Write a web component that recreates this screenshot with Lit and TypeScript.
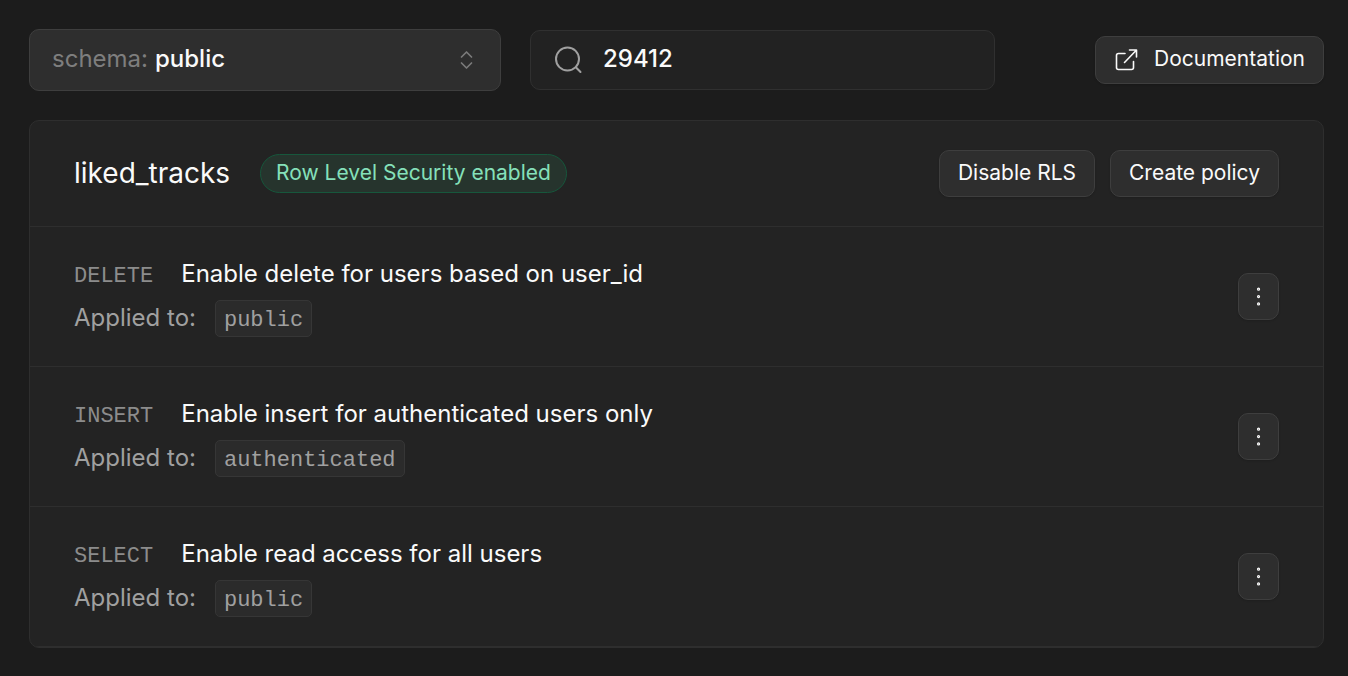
import { LitElement, html, css } from "lit";
import { customElement, property, state } from "lit/decorators.js";

interface Policy {
  command: string;
  name: string;
  role: string;
}

const shared = css`
  *,
  *::before,
  *::after {
    box-sizing: border-box;
  }
  .button {
    display: inline-flex;
    align-items: center;
    justify-content: center;
    height: 47px;
    padding: 0 18px 2px;
    border: 1px solid #3e3e3e;
    border-radius: 10px;
    background: #2e2e2e;
    color: #fafafa;
    font: inherit;
    font-size: 21px;
    line-height: 28px;
    text-decoration: none;
    white-space: nowrap;
    cursor: pointer;
    box-shadow: 0 1px 2px rgba(0, 0, 0, 0.15);
  }
  .button:hover {
    background: #363636;
  }
`;

@customElement("policy-row")
export class PolicyRow extends LitElement {
  @property({ attribute: false }) policy!: Policy;

  static styles = [
    shared,
    css`
      :host {
        display: flex;
        align-items: center;
        justify-content: space-between;
        gap: 24px;
        padding: 29px 44px;
        border-bottom: 1px solid #2e2e2e;
      }
      .details {
        display: grid;
        gap: 8px;
        min-width: 0;
      }
      .line {
        display: flex;
        align-items: baseline;
      }
      .title {
        gap: 28px;
      }
      .command,
      .role {
        font-family: "Liberation Mono", monospace;
        font-size: 22px;
        line-height: 28px;
        color: #a0a0a0;
      }
      .command {
        color: #8c8c8c;
      }
      .name {
        margin: 0;
        font-size: 24px;
        font-weight: 400;
        line-height: 36px;
        color: #fafafa;
      }
      .applied {
        gap: 19px;
        font-size: 24px;
        line-height: 28px;
        color: #a0a0a0;
      }
      .role {
        padding: 6px 8px 1px;
        border: 1px solid #363636;
        border-radius: 5px;
        background: #2b2b2b;
      }
      .menu {
        flex: none;
        width: 41px;
        padding: 0;
      }
    `,
  ];

  render() {
    const { command, name, role } = this.policy;
    return html`
      <div class="details">
        <div class="line title">
          <span class="command">${command}</span>
          <h3 class="name">${name}</h3>
        </div>
        <div class="line applied">
          <span>Applied to:</span>
          <code class="role">${role}</code>
        </div>
      </div>
      <button class="button menu" type="button" aria-label="Policy actions">
        <svg width="22" height="22" viewBox="0 0 24 24" fill="none" stroke="currentColor" stroke-width="1.300">
          <circle cx="11.500" cy="3.500" r="1.100" />
          <circle cx="11.500" cy="11.500" r="1.100" />
          <circle cx="11.500" cy="19.500" r="1.100" />
        </svg>
      </button>
    `;
  }
}

@customElement("app-root")
export class AppRoot extends LitElement {
  @state() private search = "29412";

  private policies: Policy[] = [
    { command: "DELETE", name: "Enable delete for users based on user_id", role: "public" },
    { command: "INSERT", name: "Enable insert for authenticated users only", role: "authenticated" },
    { command: "SELECT", name: "Enable read access for all users", role: "public" },
  ];

  static styles = [
    shared,
    css`
      :host {
        display: block;
        min-height: 100vh;
        box-sizing: border-box;
        padding: 29px 24px 27px 29px;
        background: #1c1c1c;
        color: #fafafa;
        font-family: Inter, "Liberation Sans", sans-serif;
        font-size: 24px;
      }
      .toolbar {
        display: flex;
        align-items: center;
        gap: 29px;
        margin-bottom: 29px;
      }
      .field {
        display: flex;
        align-items: center;
        min-width: 0;
        border-radius: 10px;
      }
      .schema {
        flex: 0 1 472px;
        height: 62px;
        padding: 0 22px;
        gap: 7px;
        border: 1px solid #3e3e3e;
        background: #2e2e2e;
      }
      .schema-label {
        padding-bottom: 2px;
        line-height: 36px;
        color: #7e7e7e;
      }
      .search {
        flex: 0 1 465px;
        height: 60px;
        padding: 0 22px;
        gap: 20px;
        border: 1px solid #303030;
        background: #222222;
      }
      .search-icon {
        display: flex;
        color: #a0a0a0;
      }
      .control {
        flex: 1;
        min-width: 0;
        padding: 0 0 2px;
        border: 0;
        outline: 0;
        appearance: none;
        background: transparent;
        color: #fafafa;
        font: inherit;
        font-weight: 500;
        line-height: 36px;
      }
      .glyph {
        flex: none;
        display: block;
      }
      .chevrons {
        color: #7a7a7a;
      }
      .docs {
        height: 48px;
        margin-left: auto;
        gap: 16px;
      }
      .card {
        border: 1px solid #2e2e2e;
        border-radius: 10px;
        background: #232323;
        overflow: hidden;
      }
      .head {
        display: flex;
        align-items: center;
        gap: 15px;
        padding: 29px 44px;
        border-bottom: 1px solid #2e2e2e;
      }
      .table-name {
        margin: 0;
        padding-bottom: 2px;
        font-size: 28px;
        font-weight: 400;
        line-height: 40px;
      }
      .badge {
        margin: 0 auto 0 15px;
        padding: 4px 15px 5px;
        border: 1px solid #17573c;
        border-radius: 20px;
        background: #26342d;
        color: #85e0ba;
        font-size: 21px;
        line-height: 28px;
        white-space: nowrap;
      }
    `,
  ];

  render() {
    return html`
      <div class="toolbar">
        <div class="field schema">
          <label class="schema-label" for="schema">schema:</label>
          <select class="control" id="schema">
            <option selected>public</option>
          </select>
          <svg class="glyph chevrons" width="24" height="24" viewBox="0 0 24 24" fill="none"
            stroke="currentColor" stroke-width="1.700" stroke-linecap="round" stroke-linejoin="round">
            <path d="M7.500 9l5-5 5 5M7.500 15l5 5 5-5" />
          </svg>
        </div>
        <div class="field search">
          <label class="search-icon" for="search" aria-label="Search">
            <svg class="glyph" width="30" height="30" viewBox="0 0 30 30" fill="none"
              stroke="currentColor" stroke-width="2" stroke-linecap="round">
              <circle cx="14.500" cy="14" r="11.500" />
              <path d="M22.800 22.300L27.500 27" />
            </svg>
          </label>
          <input class="control" id="search" type="text" .value=${this.search}
            @input=${(e: Event) => (this.search = (e.target as HTMLInputElement).value)} />
        </div>
        <a class="button docs" href="#docs">
          <svg class="glyph" width="24" height="24" viewBox="0 0 24 24" fill="none"
            stroke="currentColor" stroke-width="1.600" stroke-linecap="round" stroke-linejoin="round">
            <path d="M11 6.500H4.500a2 2 0 0 0-2 2v12a2 2 0 0 0 2 2h13a2 2 0 0 0 2-2V14.500M15.500 3H22.500V10M22.500 3L10.500 15.500" />
          </svg>
          Documentation
        </a>
      </div>
      <section class="card">
        <header class="head">
          <h2 class="table-name">liked_tracks</h2>
          <span class="badge">Row Level Security enabled</span>
          <button class="button" type="button">Disable RLS</button>
          <button class="button" type="button">Create policy</button>
        </header>
        ${this.policies.map((p) => html`<policy-row .policy=${p}></policy-row>`)}
      </section>
    `;
  }
}
